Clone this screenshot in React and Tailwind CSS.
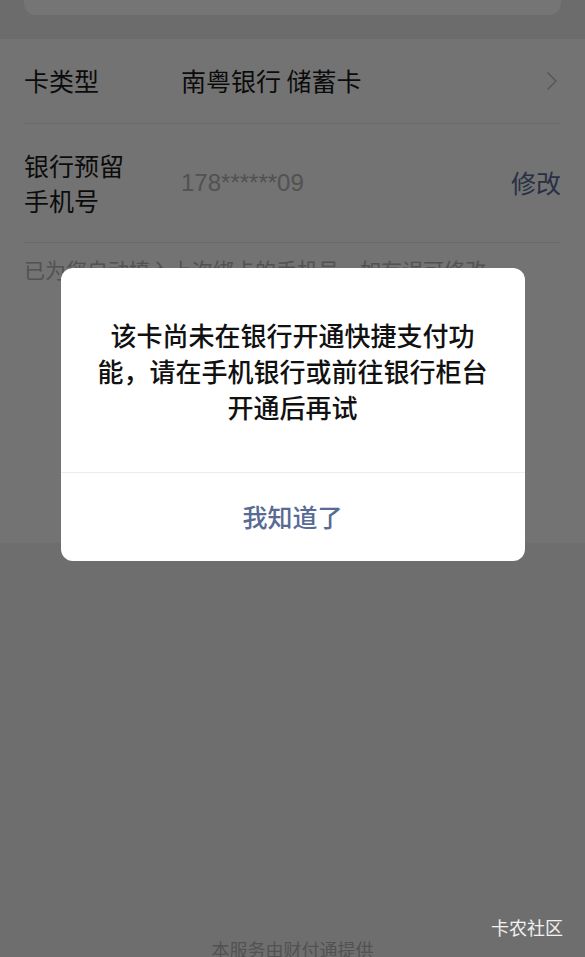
export default function App() {
  const font = { fontFamily: '"Noto Sans CJK SC", "Noto Sans", sans-serif' };

  return (
    <div
      className="relative h-[957px] w-[585px] overflow-hidden bg-[#f0f0f0] text-[#1a1a1a]"
      style={font}
    >
      <div className="flex h-full flex-col">
        {/* top card, scrolled off */}
        <div className="bg-[#ebebeb] pb-[24px]">
          <div className="mx-6 h-[15px] rounded-b-[12px] bg-white" />
        </div>

        {/* form rows */}
        <section className="h-[504px] bg-[#fafafa]">
          <div className="mx-6 flex h-[85px] items-center border-b border-[#e5e5e5]">
            <span className="w-[157px] text-[25px]">卡类型</span>
            <span className="flex-1 text-[25px]">南粤银行 储蓄卡</span>
            <svg width="12" height="20" viewBox="0 0 12 20" className="mr-[3px]">
              <path d="M1.5 1.5 L10 10 L1.5 18.5" fill="none" stroke="#bcbcbc" strokeWidth="1.4" />
            </svg>
          </div>

          <div className="mx-6 flex h-[119px] items-center border-b border-[#e5e5e5]">
            <span className="w-[157px] text-[25px] leading-[35px]">
              银行预留
              <br />
              手机号
            </span>
            <span className="flex-1 font-['Liberation_Sans',sans-serif] text-[24px] text-[#b2b2b2]">
              178******09
            </span>
            <span className="text-[25px] text-[#576b95]">修改</span>
          </div>

          <p className="mx-6 pt-[11px] text-[21px] leading-[30px] text-[#b2b2b2]">
            已为您自动填入上次绑卡的手机号，如有误可修改
          </p>
        </section>

        <div className="flex flex-1 flex-col items-center justify-end">
          <p className="-mb-[4px] text-[18px] leading-[24px] text-[#b2b2b2]">本服务由财付通提供</p>
        </div>
      </div>

      {/* mask + dialog */}
      <div className="absolute inset-0 bg-black/[0.54] pt-[268px]">
        <div className="mx-auto w-[464px] overflow-hidden rounded-[12px] bg-white">
          <div className="px-8 pt-[49px] pb-[47px] text-center text-[26px] font-medium leading-[36px] text-[#111]">
            该卡尚未在银行开通快捷支付功能，请在手机银行或前往银行柜台开通后再试
          </div>
          <div className="flex h-[89px] items-center justify-center border-t border-[#ededed] text-[25px] font-medium text-[#576b95]">
            我知道了
          </div>
        </div>
      </div>

      {/* watermark */}
      <span className="absolute right-[22px] bottom-[18px] text-[18px] leading-[24px] text-white/90">
        卡农社区
      </span>
    </div>
  );
}
